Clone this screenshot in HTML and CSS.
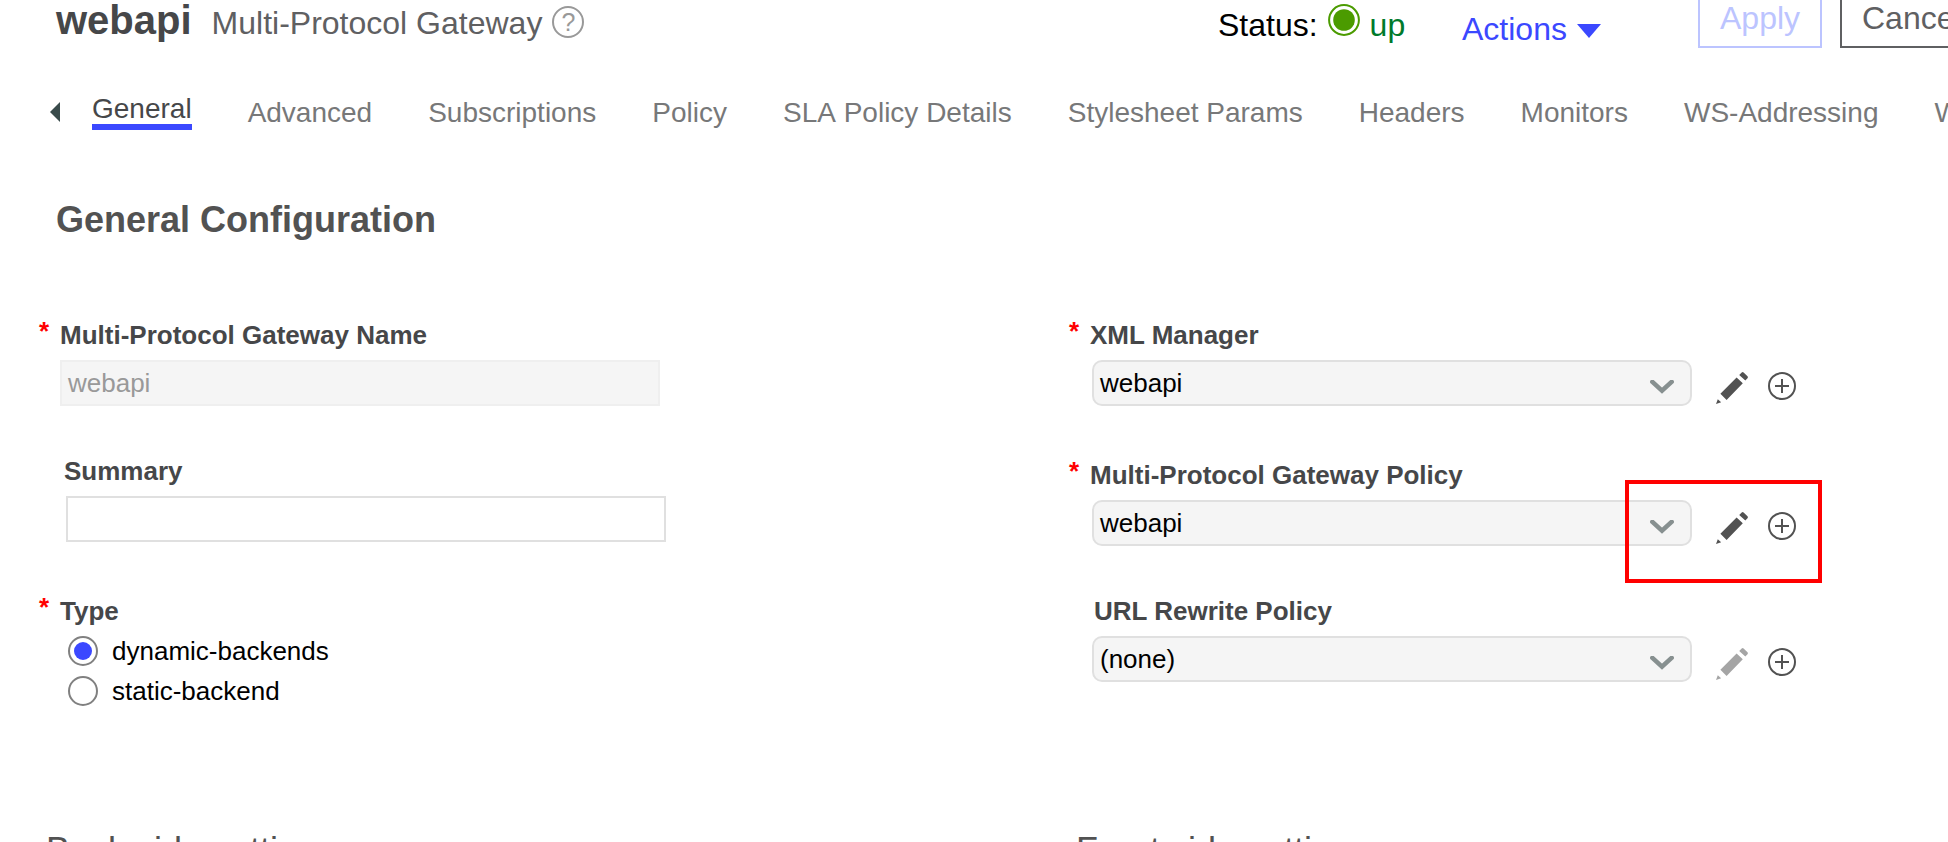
FILE: index.html
```html
<!DOCTYPE html>
<html lang="en">
<head>
<meta charset="utf-8">
<title>Multi-Protocol Gateway</title>
<link rel="stylesheet" href="styles.css">
</head>
<body>
<svg class="symbols" aria-hidden="true">
  <symbol id="chevron" viewBox="0 0 24 14"><path d="M2.400 1.900 12 10.600l9.600-8.700" fill="none" stroke="#879090" stroke-width="4.600" stroke-linecap="round"/></symbol>
  <symbol id="pencil" viewBox="0 0 32 32">
    <path d="M0 32 1.800 27.200 5.200 30.200Z M4.400 21.800 20.600 5.400 26.800 11.200 10.600 27.900Z M23.200 3 25.700.5Q26.600-.3 27.600.5L31.500 4.300Q32.300 5.200 31.500 6.200L29.300 8.600Z" fill="currentColor"/>
  </symbol>
  <symbol id="plus" viewBox="0 0 28 28"><circle cx="14" cy="14" r="13" fill="none" stroke="#525252" stroke-width="2"/><path d="M14 7v14M7 14h14" stroke="#525252" stroke-width="2"/></symbol>
</svg>

<header class="header">
  <div class="title">
    <h1 class="name">webapi</h1>
    <span class="kind">Multi-Protocol Gateway</span>
    <span class="help">?</span>
  </div>
  <div class="status">
    <span>Status:</span>
    <svg class="led" viewBox="0 0 32 32"><circle cx="16" cy="16" r="14.900" fill="#fff" stroke="#4b9b00" stroke-width="2"/><circle cx="16" cy="16" r="10.800" fill="#4b9b00"/></svg>
    <span class="up">up</span>
  </div>
  <div class="actions">Actions<svg class="caret" viewBox="0 0 24 14"><path d="M0 0h24L12 14z" fill="#3b48ff"/></svg></div>
  <div class="buttons">
    <button class="btn apply" disabled>Apply</button>
    <button class="btn cancel">Cancel</button>
  </div>
</header>

<nav class="tabs">
  <svg class="prev" viewBox="0 0 10 20"><path d="M10 0v20L0 10z" fill="#394b4b"/></svg>
  <a class="tab active">General</a>
  <a class="tab">Advanced</a>
  <a class="tab">Subscriptions</a>
  <a class="tab">Policy</a>
  <a class="tab">SLA Policy Details</a>
  <a class="tab">Stylesheet Params</a>
  <a class="tab">Headers</a>
  <a class="tab">Monitors</a>
  <a class="tab">WS-Addressing</a>
  <a class="tab">WS-Policy</a>
</nav>

<main>
  <h2 class="section-title">General Configuration</h2>
  <div class="columns">
    <section class="column left">
      <div class="field required">
        <label class="label">Multi-Protocol Gateway Name</label>
        <div class="box disabled">webapi</div>
      </div>
      <div class="field summary">
        <label class="label">Summary</label>
        <div class="box"></div>
      </div>
      <div class="field required type">
        <label class="label">Type</label>
        <div class="radios">
          <div class="option"><span class="radio checked"></span>dynamic-backends</div>
          <div class="option"><span class="radio"></span>static-backend</div>
        </div>
      </div>
      <h3 class="subsection">Back side settings</h3>
    </section>
    <section class="column right">
      <div class="field required">
        <label class="label">XML Manager</label>
        <div class="control">
          <div class="select">webapi<svg class="chevron"><use href="#chevron"/></svg></div>
          <svg class="pencil"><use href="#pencil"/></svg>
          <svg class="plus"><use href="#plus"/></svg>
        </div>
      </div>
      <div class="field required policy">
        <label class="label">Multi-Protocol Gateway Policy</label>
        <div class="control">
          <div class="select">webapi<svg class="chevron"><use href="#chevron"/></svg></div>
          <svg class="pencil"><use href="#pencil"/></svg>
          <svg class="plus"><use href="#plus"/></svg>
        </div>
        <div class="highlight"></div>
      </div>
      <div class="field rewrite">
        <label class="label">URL Rewrite Policy</label>
        <div class="control">
          <div class="select">(none)<svg class="chevron"><use href="#chevron"/></svg></div>
          <svg class="pencil muted"><use href="#pencil"/></svg>
          <svg class="plus"><use href="#plus"/></svg>
        </div>
      </div>
      <h3 class="subsection">Front side settings</h3>
    </section>
  </div>
</main>
</body>
</html>
```

FILE: styles.css
```css
* { box-sizing: border-box; }
html, body { overflow: hidden; }
body {
  margin: 0;
  width: 1948px;
  height: 842px;
  background: #fff;
  color: #000;
  font: 26px/30px "Liberation Sans", Arial, sans-serif;
  white-space: nowrap;
}
svg { display: block; flex: none; }
h1, h2, h3 { margin: 0; }
.symbols { display: none; }

.header {
  display: flex;
  align-items: flex-start;
  height: 92px;
  padding-left: 56px;
  font-size: 32px;
  line-height: 40px;
}
.header > * { flex: none; }
.title { display: flex; align-items: baseline; width: 1162px; }
.name { font-size: 40px; line-height: 40px; color: #464749; }
.kind { margin-left: 20px; color: #5f6062; }
.help {
  align-self: flex-start;
  width: 32px;
  height: 32px;
  margin: 6px 0 0 10px;
  border: 2px solid #999;
  border-radius: 50%;
  color: #999;
  font-size: 25px;
  line-height: 29px;
  text-align: center;
}
.status { display: flex; width: 244px; padding-top: 5px; }
.led { width: 32px; height: 32px; margin: -1px 10px 0 10px; }
.up { color: #007a2b; }
.actions { display: flex; width: 236px; padding-top: 9px; color: #3b48ff; }
.caret { width: 24px; height: 14px; margin: 15px 0 0 10px; }
.buttons { display: flex; gap: 18px; margin-top: -12px; }
.btn {
  flex: none;
  height: 60px;
  padding: 0 20px 0 20px;
  border: 2px solid;
  background: none;
  font: 32px/54px "Liberation Sans", Arial, sans-serif;
  text-align: left;
}
.apply { width: 124px; border-color: #bcc4ff; color: #bcc4ff; }
.cancel { width: 140px; border-color: #5f6062; color: #5f6062; }

.tabs {
  display: flex;
  align-items: flex-start;
  gap: 56px;
  height: 108px;
  padding-left: 50px;
  overflow: hidden;
  font-size: 28px;
  line-height: 32px;
  font-kerning: none;
}
.prev { width: 10px; height: 20px; margin: 10px -24px 0 0; }
.tab { flex: none; padding-top: 5px; color: #777879; }
.tab.active { height: 38px; padding: 1px 0 0; border-bottom: 6px solid #3b48ff; color: #464749; }

.section-title { padding-left: 56px; font-size: 36px; line-height: 40px; color: #525252; }
.columns { display: grid; grid-template-columns: 1030px 1fr; margin-top: 80px; }
.column { padding-left: 60px; }

.field { position: relative; }
.label { display: block; margin-bottom: 10px; font-weight: bold; color: #464749; }
.required::before {
  content: "*";
  position: absolute;
  left: -21px;
  top: -4px;
  font-weight: bold;
  color: #f00;
}
.box { width: 600px; height: 46px; padding: 6px; border: 2px solid #e0e0e0; }
.box.disabled { border-color: #efefef; background: #f5f5f5; color: #999; }
.summary { margin-top: 50px; padding-left: 4px; }
.summary .box { margin-left: 2px; }
.type { margin-top: 54px; }

.radios { display: grid; gap: 10px; padding-left: 8px; }
.option { display: flex; align-items: center; gap: 14px; height: 30px; }
.radio { width: 30px; height: 30px; padding: 4px; border: 2px solid #808080; border-radius: 50%; }
.radio.checked::after {
  content: "";
  display: block;
  width: 18px;
  height: 18px;
  border-radius: 50%;
  background: #3b48ff;
}

.control { display: flex; padding-left: 2px; }
.select {
  display: flex;
  justify-content: space-between;
  width: 600px;
  height: 46px;
  padding: 6px 16px 6px 6px;
  border: 2px solid #e0e0e0;
  border-radius: 10px;
  background: #f5f5f5;
}
.chevron { width: 24px; height: 14px; margin-top: 12px; }
.pencil { width: 32px; height: 32px; margin: 12px 20px 0 24px; color: #525252; }
.pencil.muted { color: #a5a5a5; }
.plus { width: 28px; height: 28px; margin-top: 12px; }
.policy { margin-top: 54px; }
.rewrite { margin-top: 50px; }
.rewrite .label { padding-left: 4px; }
/* call-out frame drawn over the policy controls */
.highlight {
  position: absolute;
  left: 535px;
  top: 20px;
  width: 197px;
  height: 103px;
  border: 4px solid #f00;
}

.subsection { font-size: 36px; line-height: 40px; font-weight: normal; color: #525252; }
.left .subsection { margin: 125px 0 0 -14px; }
.right .subsection { margin: 149px 0 0 -14px; }
```
